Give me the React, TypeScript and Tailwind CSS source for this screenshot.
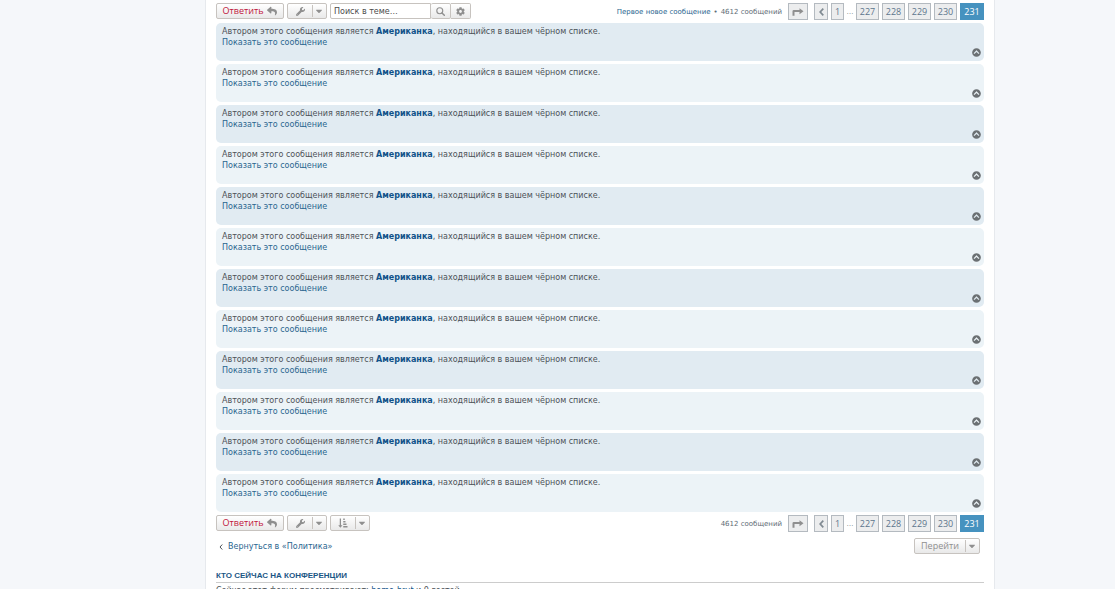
import React from "react";
import { FaReply, FaWrench, FaCog, FaCaretDown, FaChevronCircleUp } from "react-icons/fa";

const POSTS = Array.from({ length: 12 }, (_, i) => i);
const PAGES = ["227", "228", "229", "230"];

const BUTTON =
  "flex h-4 items-center rounded-xs border border-[#c7c3bf] bg-linear-to-b from-white to-[#e9e9e9] font-['Open_Sans',sans-serif] text-[9px] leading-[14px] font-medium text-[#8f8f8f]";
const PAGE_LINK =
  "flex h-[17px] items-center justify-center border border-[#b4bac0] bg-[#ecedee] font-['Open_Sans',sans-serif] text-[9px] leading-[15px] font-medium text-[#5c758c]";

function SearchIcon() {
  return (
    <svg viewBox="0 0 16 16" className="size-[9px]" fill="none" stroke="currentColor" aria-hidden="true">
      <circle cx="6.7" cy="6.7" r="5.3" strokeWidth="2" />
      <path d="M10.6 10.6 L14.8 14.8" strokeWidth="2.6" strokeLinecap="round" />
    </svg>
  );
}

function JumpIcon() {
  return (
    <svg viewBox="0 0 24 16" className="h-2 w-3" fill="#8f8f8f" aria-hidden="true">
      <path d="M1 15.5V6.5Q1 4 3.5 4H15V.3L23 6.3L15 12.3V8H5V15.5Z" />
    </svg>
  );
}

function PrevIcon() {
  return (
    <svg viewBox="0 0 10 16" className="h-2 w-[5px]" fill="none" stroke="#808a92" strokeWidth="3.4" aria-hidden="true">
      <path d="M8.6 1.4L2.4 8L8.6 14.6" />
    </svg>
  );
}

function SortIcon() {
  return (
    <svg viewBox="0 0 20 20" className="size-[10px]" fill="#8f8f8f" aria-hidden="true">
      <path d="M3.5 1H6V14.5H9L4.75 19.5L.5 14.5H3.5ZM10.5 1H13.5V4H10.5ZM10.5 6H15V9H10.5ZM10.5 11H17V14H10.5ZM10.5 16H19V19H10.5Z" />
    </svg>
  );
}

function Caret() {
  return (
    <span className="flex h-3 w-3.5 items-center justify-center border-l border-[#c7c3bf] pr-0.5">
      <FaCaretDown className="size-[10px]" aria-hidden="true" />
    </span>
  );
}

function ReplyButton() {
  return (
    <button type="button" className={`${BUTTON} w-[68px] justify-center gap-1`}>
      <span className="text-[#c0143c]">Ответить</span>
      <FaReply className="size-[10px]" aria-hidden="true" />
    </button>
  );
}

function MenuButton({ label, children }: { label: string; children: React.ReactNode }) {
  return (
    <button type="button" aria-label={label} className={`${BUTTON} w-10 justify-end`}>
      <span className="flex flex-1 justify-center">{children}</span>
      <Caret />
    </button>
  );
}

function Pagination({ showNew }: { showNew?: boolean }) {
  return (
    <nav aria-label="Страницы" className="ml-auto flex items-center text-[7px] leading-4 text-[#606b75]">
      {showNew && (
        <>
          <a href="#new" className="text-[#2a668f]">Первое новое сообщение</a>
          <span className="px-[3px]">•</span>
        </>
      )}
      <span>4612 сообщений</span>
      <button type="button" aria-label="Перейти к странице" className={`${PAGE_LINK} ml-1.5 w-5`}>
        <JumpIcon />
      </button>
      <a href="#prev" aria-label="Назад" className={`${PAGE_LINK} ml-1.5 w-3.5`}>
        <PrevIcon />
      </a>
      <a href="#1" className={`${PAGE_LINK} ml-[3px] w-[13px]`}>1</a>
      <span className="w-3 text-center">…</span>
      <span className="flex gap-[3px]">
        {PAGES.map((page) => (
          <a key={page} href={`#${page}`} className={`${PAGE_LINK} w-[23px]`}>
            {page}
          </a>
        ))}
        <span
          aria-current="page"
          className="flex h-[17px] w-6 items-center justify-center bg-[#4692bf] font-['Open_Sans',sans-serif] text-[9px] leading-[17px] font-medium text-white"
        >
          231
        </span>
      </span>
    </nav>
  );
}

function Post({ index }: { index: number }) {
  return (
    <article
      className={`relative h-[38px] rounded-[5px] px-1.5 pt-[3px] text-[8px] leading-[11px] text-[#4c5258] ${
        index % 2 === 0 ? "bg-[#e1ebf2]" : "bg-[#ecf3f7]"
      }`}
    >
      <p>
        Автором этого сообщения является{" "}
        <a href="#author" className="font-bold text-[#105289]">Американка</a>, находящийся в вашем чёрном списке.
      </p>
      <a href="#show" className="block w-fit text-[#2a668f]">Показать это сообщение</a>
      <a href="#top" aria-label="Вернуться к началу" className="absolute right-[3px] bottom-1 text-[#6b7073]">
        <FaChevronCircleUp className="size-[9px]" aria-hidden="true" />
      </a>
    </article>
  );
}

export default function App() {
  return (
    <div className="h-screen overflow-hidden bg-[#f5f7fa] pr-[120px] pl-[205px] font-['DejaVu_Sans',Verdana,sans-serif]">
      <main className="min-h-full border-x border-[#e6e9ed] bg-white px-2.5">
        <div className="flex h-[23px] items-start pt-[3px]">
          <div className="flex gap-[3px]">
            <ReplyButton />
            <MenuButton label="Управление темой">
              <FaWrench className="size-[9px]" aria-hidden="true" />
            </MenuButton>
            <form role="search" className="flex h-4" onSubmit={(event) => event.preventDefault()}>
              <input
                type="search"
                aria-label="Поиск в теме"
                placeholder="Поиск в теме…"
                className="h-4 w-[101px] rounded-l-xs border border-[#c7c3bf] bg-white px-[3px] text-[8px] leading-[14px] text-[#333333] outline-none placeholder:text-[#4c4c4c]"
              />
              <button type="submit" aria-label="Поиск" className={`${BUTTON} w-5 justify-center rounded-none border-l-0`}>
                <SearchIcon />
              </button>
              <button type="button" aria-label="Расширенный поиск" className={`${BUTTON} w-5 justify-center rounded-l-none border-l-0`}>
                <FaCog className="size-[9px]" aria-hidden="true" />
              </button>
            </form>
          </div>
          <Pagination showNew />
        </div>

        <div className="flex flex-col gap-[3px]">
          {POSTS.map((index) => (
            <Post key={index} index={index} />
          ))}
        </div>

        <div className="flex h-[23px] items-start pt-[3px]">
          <div className="flex gap-[3px]">
            <ReplyButton />
            <MenuButton label="Управление темой">
              <FaWrench className="size-[9px]" aria-hidden="true" />
            </MenuButton>
            <MenuButton label="Сортировка">
              <SortIcon />
            </MenuButton>
          </div>
          <Pagination />
        </div>

        <div className="flex h-[23px] items-start justify-between pt-[3px] pr-1 pl-[3px]">
          <a href="#forum" className="flex items-center gap-[5px] text-[8px] leading-[18px] text-[#2a668f]">
            <svg viewBox="0 0 8 12" className="h-1.5 w-1" fill="none" stroke="#4c5258" strokeWidth="2" aria-hidden="true">
              <path d="M6.5 1L2 6L6.5 11" />
            </svg>
            Вернуться в «Политика»
          </a>
          <button type="button" className={`${BUTTON} w-[66px] justify-end`}>
            <span className="flex-1 text-center">Перейти</span>
            <Caret />
          </button>
        </div>

        <section className="pt-2.5">
          <h3 className="border-b border-[#cccccc] pt-0.5 font-['Liberation_Sans',Arial,sans-serif] text-[8px] leading-3 font-bold text-[#1a5685] uppercase">
            Кто сейчас на конференции
          </h3>
          <p className="pt-0.5 text-[8px] leading-[11px] text-[#4c5258]">
            Сейчас этот форум просматривают: <a href="#user" className="text-[#105289]">homo-brut</a> и 0 гостей
          </p>
        </section>
      </main>
    </div>
  );
}
